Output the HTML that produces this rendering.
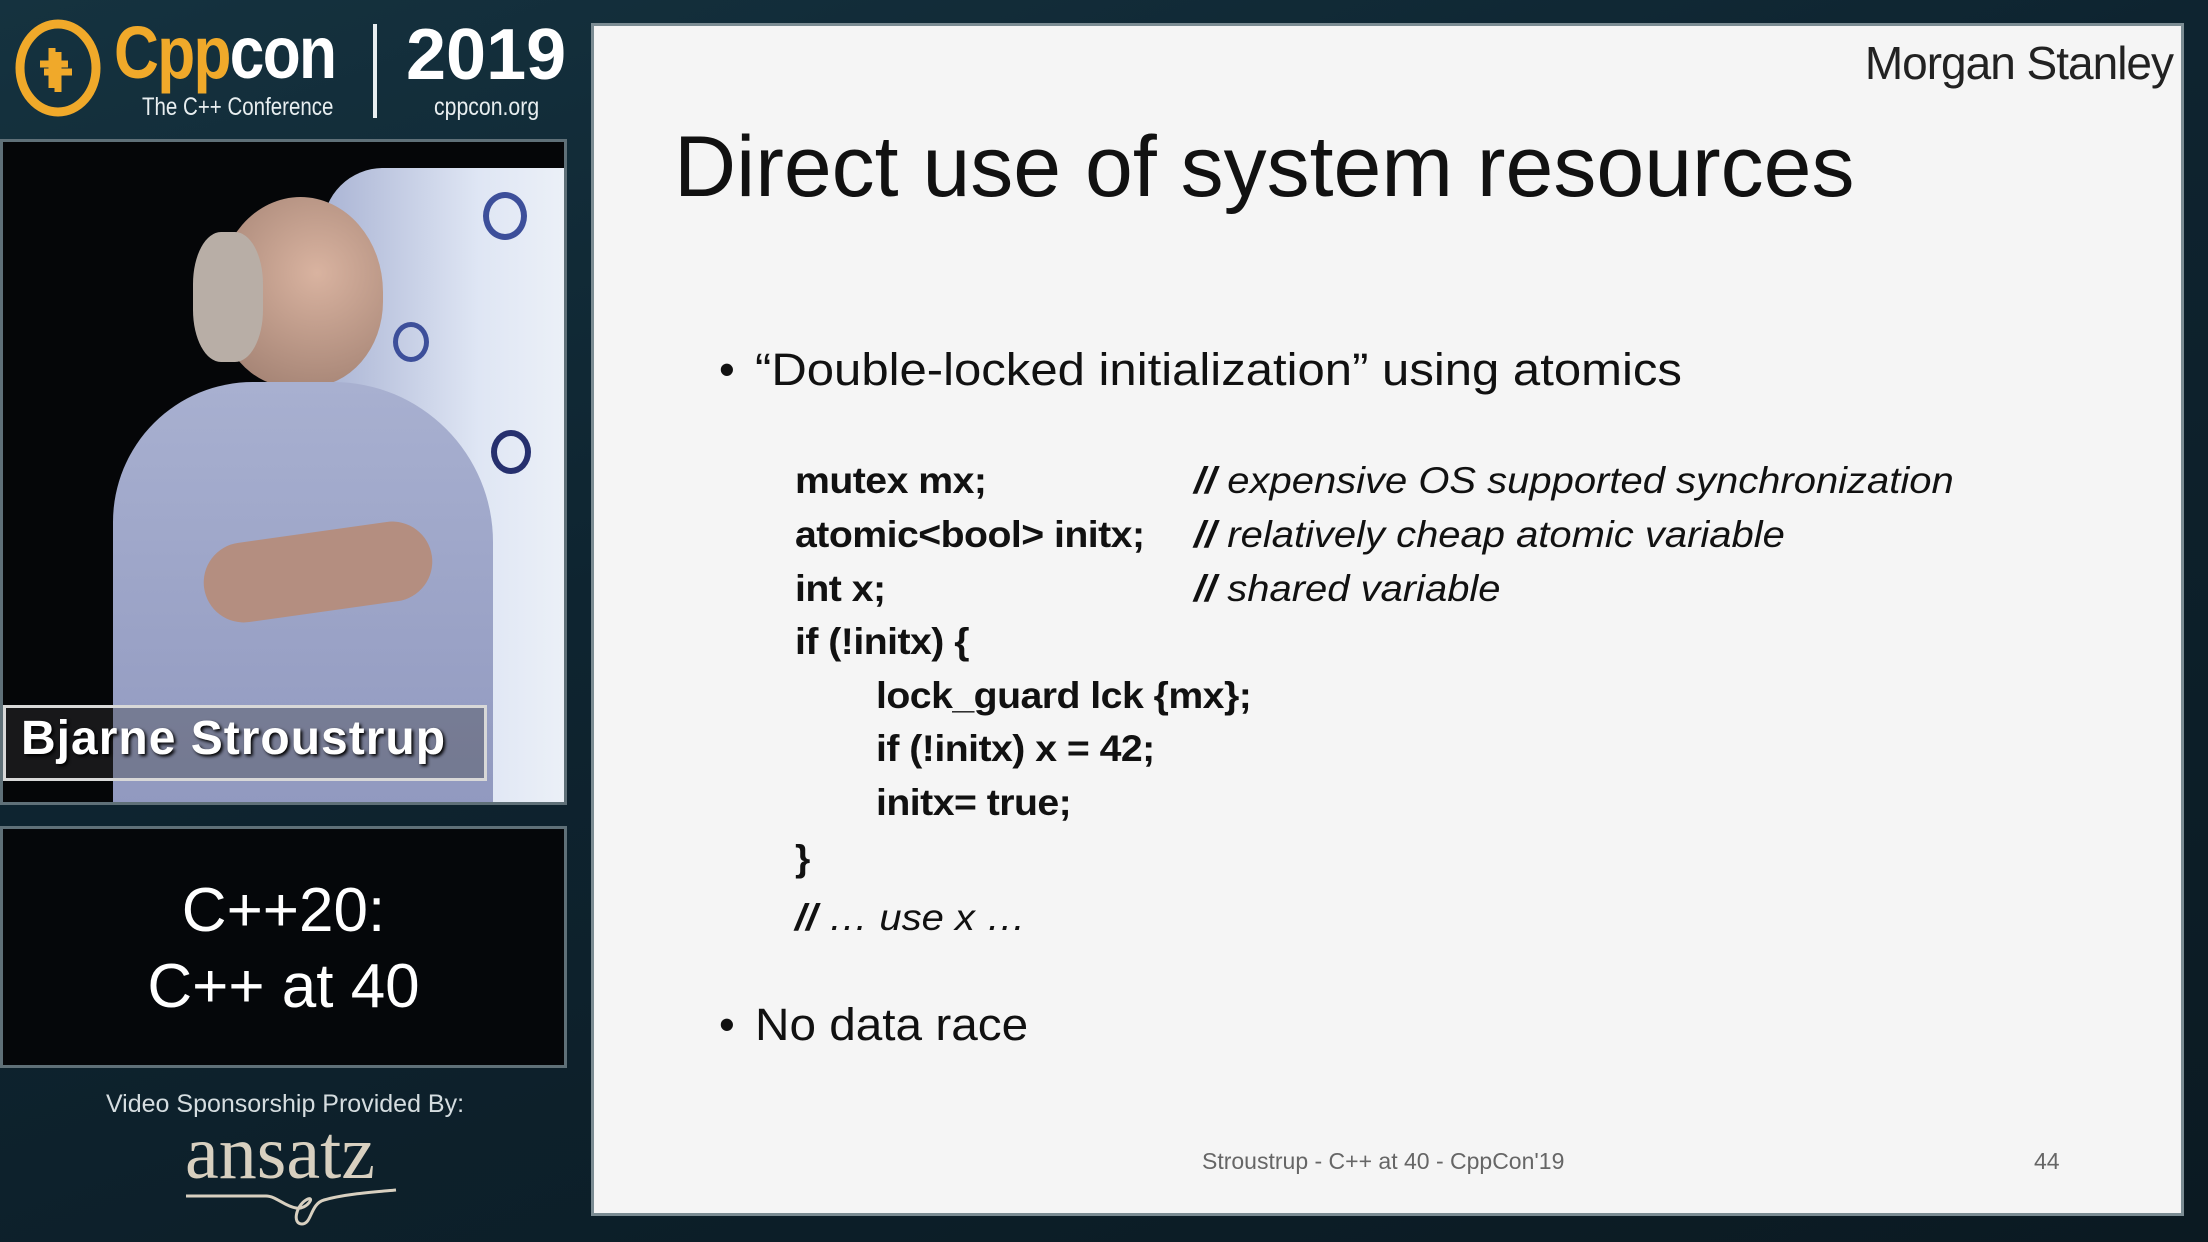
<!DOCTYPE html>
<html><head><meta charset="utf-8"><style>
*{margin:0;padding:0;box-sizing:border-box}
body{width:2208px;height:1242px;overflow:hidden;position:relative;background:linear-gradient(160deg,#15323f 0%,#0e2430 40%,#0b1a22 100%);font-family:"Liberation Sans",sans-serif}
.abs{position:absolute}
.slide{left:591px;top:23px;width:1593px;height:1193px;background:#f5f5f5;border:3px solid #7b8c93;color:#111}
.sl{position:absolute;white-space:nowrap;transform-origin:left}
.code{font-weight:bold;font-size:37px;letter-spacing:-0.5px;transform:scaleX(1.06)}
.cm{font-style:italic;font-weight:normal;font-size:37px;transform:scaleX(1.08)}
</style></head><body>
<svg class="abs" style="left:14px;top:18px" width="90" height="100" viewBox="0 0 90 100">
<ellipse cx="44" cy="50" rx="38" ry="44" fill="none" stroke="#f0a92a" stroke-width="9"/>
<path d="M38 30v40M26 46h28M44 34v40M30 54h28" stroke="#f0a92a" stroke-width="7" fill="none"/>
</svg>
<div class="abs" style="left:114px;top:10px;font-size:74px;font-weight:bold;color:#f0a92a;letter-spacing:-2px;transform:scaleX(0.84);transform-origin:left">Cpp<span style="color:#fff">con</span></div>
<div class="abs" style="left:142px;top:93px;font-size:25px;color:#e8eef0;transform:scaleX(0.82);transform-origin:left">The C++ Conference</div>
<div class="abs" style="left:373px;top:24px;width:4px;height:94px;background:#e8eef0"></div>
<div class="abs" style="left:406px;top:14px;font-size:72px;font-weight:bold;color:#fff;transform:scaleX(1.0);transform-origin:left">2019</div>
<div class="abs" style="left:434px;top:93px;font-size:25px;color:#e8eef0;transform:scaleX(0.85);transform-origin:left">cppcon.org</div>
<div class="abs" style="left:0;top:139px;width:567px;height:666px;background:#050608;border:3px solid #5f7078;overflow:hidden">
  <div class="abs" style="left:320px;top:26px;width:260px;height:640px;background:linear-gradient(90deg,#aab4d4,#dfe6f4 60%,#eef2f8);border-radius:60px 0 0 0"></div>
  <div class="abs" style="left:480px;top:50px;width:44px;height:48px;border-radius:50%;border:6px solid #3d4f9a"></div>
  <div class="abs" style="left:390px;top:180px;width:36px;height:40px;border-radius:50%;border:5px solid #3d4f9a"></div>
  <div class="abs" style="left:488px;top:288px;width:40px;height:44px;border-radius:50%;border:6px solid #26306e"></div>
  <div class="abs" style="left:215px;top:55px;width:165px;height:190px;border-radius:50% 50% 45% 45%;background:radial-gradient(circle at 60% 40%,#d9b3a0,#9a7a6c)"></div>
  <div class="abs" style="left:190px;top:90px;width:70px;height:130px;border-radius:40%;background:#b8aea6"></div>
  <div class="abs" style="left:110px;top:240px;width:380px;height:460px;border-radius:140px 160px 0 0;background:linear-gradient(180deg,#a8b0d0,#8f97be)"></div>
  <div class="abs" style="left:200px;top:390px;width:230px;height:80px;border-radius:40px;background:#b48e80;transform:rotate(-8deg)"></div>
  <div class="abs" style="left:0;top:563px;width:484px;height:76px;border:3px solid #d8d8d8;background:rgba(60,60,60,.35)"></div>
  <div class="abs" style="left:18px;top:569px;font-size:48px;font-weight:bold;color:#fff;letter-spacing:1px;text-shadow:2px 2px 3px #000">Bjarne Stroustrup</div>
</div>
<div class="abs" style="left:0;top:826px;width:567px;height:242px;background:#05070a;border:3px solid #5f7078"></div>
<div class="abs" style="left:0;top:873px;width:567px;text-align:center;color:#fff;font-size:62px;line-height:76px">C++20:<br>C++ at 40</div>
<div class="abs" style="left:0;top:1090px;width:570px;text-align:center;color:#d5dde0;font-size:25px">Video Sponsorship Provided By:</div>
<div class="abs" style="left:0;top:1110px;width:560px;text-align:center;color:#d8d0c0;font-size:76px;font-family:'Liberation Serif',serif">ansatz</div>
<svg class="abs" style="left:184px;top:1188px" width="215" height="40" viewBox="0 0 215 40"><path d="M2 8h80c10 0 18 10 30 12c12 2 20-14 10-8c-10 6-14 24-4 24c10 0 8-20 22-24c20-6 50-8 72-10" stroke="#d8d0c0" stroke-width="3" fill="none"/></svg>
<div class="abs slide">
  <div class="sl" style="right:8px;top:10px;font-size:46px;color:#222;letter-spacing:-1px">Morgan Stanley</div>
  <div class="sl" style="left:80px;top:92px;font-size:86px;color:#111;transform:scaleX(1.0)">Direct use of system resources</div>
  <div class="sl" style="left:125px;top:318px;font-size:45px">•</div>
  <div class="sl" style="left:161px;top:318px;font-size:45px;transform:scaleX(1.09)">“Double-locked initialization” using atomics</div>
  <div class="sl code" style="left:201px;top:434px">mutex mx;</div>
  <div class="sl code" style="left:201px;top:488px">atomic&lt;bool&gt; initx;</div>
  <div class="sl code" style="left:201px;top:542px">int x;</div>
  <div class="sl code" style="left:201px;top:595px">if (!initx) {</div>
  <div class="sl code" style="left:282px;top:649px">lock_guard lck {mx};</div>
  <div class="sl code" style="left:282px;top:702px">if (!initx) x = 42;</div>
  <div class="sl code" style="left:282px;top:756px">initx= true;</div>
  <div class="sl code" style="left:201px;top:812px">}</div>
  <div class="sl cm" style="left:201px;top:871px"><b>//</b> … use x …</div>
  <div class="sl cm" style="left:600px;top:434px"><b>//</b> expensive OS supported synchronization</div>
  <div class="sl cm" style="left:600px;top:488px"><b>//</b> relatively cheap atomic variable</div>
  <div class="sl cm" style="left:600px;top:542px"><b>//</b> shared variable</div>
  <div class="sl" style="left:125px;top:973px;font-size:45px">•</div>
  <div class="sl" style="left:161px;top:973px;font-size:45px;transform:scaleX(1.06)">No data race</div>
  <div class="sl" style="left:608px;top:1122px;font-size:23px;color:#666">Stroustrup - C++ at 40 - CppCon'19</div>
  <div class="sl" style="left:1440px;top:1122px;font-size:23px;color:#666">44</div>
</div>
</body></html>
